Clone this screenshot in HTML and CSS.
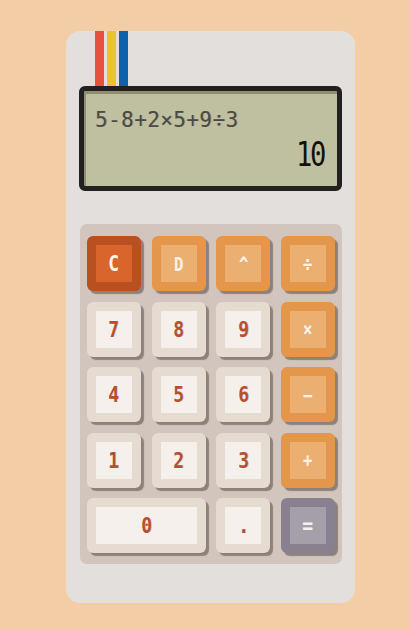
FILE: index.html
```html
<!DOCTYPE html>
<html>
<head>
<meta charset="utf-8">
<link rel="stylesheet" href="styles.css">
</head>
<body>
<div class="calc">
  <div class="stripes"><span class="s red"></span><span class="s yellow"></span><span class="s blue"></span></div>
  <div class="display">
    <div class="expr">5-8+2×5+9÷3</div>
    <div class="result">10</div>
  </div>
  <div class="keypad">
    <button class="key clear"><span><i>C</i></span></button>
    <button class="key op"><span><i>D</i></span></button>
    <button class="key op"><span><i>^</i></span></button>
    <button class="key op"><span><i>÷</i></span></button>
    <button class="key num"><span><i>7</i></span></button>
    <button class="key num"><span><i>8</i></span></button>
    <button class="key num"><span><i>9</i></span></button>
    <button class="key op"><span><i>×</i></span></button>
    <button class="key num"><span><i>4</i></span></button>
    <button class="key num"><span><i>5</i></span></button>
    <button class="key num"><span><i>6</i></span></button>
    <button class="key op"><span><i>−</i></span></button>
    <button class="key num"><span><i>1</i></span></button>
    <button class="key num"><span><i>2</i></span></button>
    <button class="key num"><span><i>3</i></span></button>
    <button class="key op"><span><i>+</i></span></button>
    <button class="key num wide"><span><i>0</i></span></button>
    <button class="key num"><span><i>.</i></span></button>
    <button class="key eq"><span><i>=</i></span></button>
  </div>
</div>
</body>
</html>
```
FILE: styles.css
```css
html, body {
  margin: 0;
  height: 100%;
}
body {
  background: #f2cda5;
  padding: 31px 0 0 66px;
  box-sizing: border-box;
  font-family: "DejaVu Sans Mono", monospace;
}
.calc {
  width: 289px;
  height: 572px;
  box-sizing: border-box;
  background: #e3dfdc;
  border-radius: 14px;
  padding: 0 13px;
}
.stripes {
  display: flex;
  gap: 3px;
  height: 55px;
  margin-left: 16px;
}
.s {
  width: 9px;
  height: 100%;
}
.red { background: #e84f3f; }
.yellow { background: #ecc22d; }
.blue { background: #0e62ad; }
.display {
  height: 105px;
  box-sizing: border-box;
  border: 5px solid #222120;
  border-radius: 6px;
  background: #bfc0a0;
  box-shadow: inset 2px 3px 0 #8e8f70;
  padding: 16px 13px 0 11px;
  display: flex;
  flex-direction: column;
}
.expr {
  color: #4a4a46;
  font-size: 21px;
  letter-spacing: 0.4px;
  text-shadow: 1px 0 0 rgba(120,90,60,0.35);
  line-height: 26px;
}
.result {
  align-self: flex-end;
  color: #111;
  font-size: 34px;
  line-height: 36px;
  letter-spacing: -3px;
  margin-top: 3px;
  transform: scaleX(0.8);
  transform-origin: right center;
}
.keypad {
  margin: 33px 0 0 1px;
  background: #d1c5bd;
  border-radius: 7px;
  padding: 12px 7px 11px 7px;
  display: grid;
  grid-template-columns: repeat(4, 1fr);
  column-gap: 10.5px;
  row-gap: 10.5px;
}
.key {
  height: 55px;
  border: none;
  border-radius: 6px;
  padding: 9px;
  margin: 0;
  box-shadow: 3px 3px 1px #8d817b;
  display: flex;
  cursor: pointer;
}
.key span {
  flex: 1;
  display: flex;
  align-items: center;
  justify-content: center;
  font-family: "DejaVu Sans Mono", monospace;
  font-size: 22px;
  font-weight: bold;
}
.key i {
  font-style: normal;
  display: inline-block;
  transform: scaleX(0.82);
}
.num { background: #e6dbd0; }
.num span { background: #f5f0ec; color: #b5502b; text-shadow: 1px 0 0 rgba(80,60,200,0.25); }
.op { background: #e4964a; }
.op span { background: #ebaf72; color: #fbf3ea; font-size: 19px; }
.clear { background: #b8501f; }
.clear span { background: #d9652c; color: #fff4ea; }
.eq { background: #8a8190; }
.eq span { background: #a59fa9; color: #f4f0f0; font-size: 22px; }
.wide { grid-column: span 2; }
```
